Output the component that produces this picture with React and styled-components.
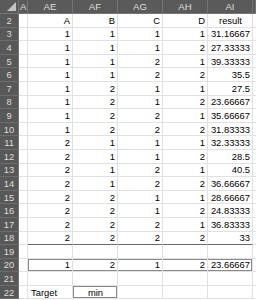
import React from "react";
import styled, { createGlobalStyle } from "styled-components";

const GlobalStyle = createGlobalStyle`
  html, body {
    margin: 0;
    padding: 0;
    background: #ffffff;
  }
  body {
    font-family: "Liberation Sans", Arial, sans-serif;
  }
`;

const columns = ["AD", "AE", "AF", "AG", "AH", "AI", ""];

const data = [
  [1, 1, 1, 1, "31.16667"],
  [1, 1, 1, 2, "27.33333"],
  [1, 1, 2, 1, "39.33333"],
  [1, 1, 2, 2, "35.5"],
  [1, 2, 1, 1, "27.5"],
  [1, 2, 1, 2, "23.66667"],
  [1, 2, 2, 1, "35.66667"],
  [1, 2, 2, 2, "31.83333"],
  [2, 1, 1, 1, "32.33333"],
  [2, 1, 1, 2, "28.5"],
  [2, 1, 2, 1, "40.5"],
  [2, 1, 2, 2, "36.66667"],
  [2, 2, 1, 1, "28.66667"],
  [2, 2, 1, 2, "24.83333"],
  [2, 2, 2, 1, "36.83333"],
  [2, 2, 2, 2, "33"],
];

const frameShadow = (edge) => {
  const parts = ["inset 0 1px 0 #8a8a8a", "inset 0 -1px 0 #8a8a8a"];
  if (edge === "left" || edge === "all") parts.push("inset 1px 0 0 #8a8a8a");
  if (edge === "right" || edge === "all") parts.push("inset -1px 0 0 #8a8a8a");
  return parts.join(", ");
};

export default function App() {
  const renderRow = (num, values, opts = {}) => (
    <React.Fragment key={num}>
      <RowHead>{num}</RowHead>
      <Cell />
      {values.map((v, i) => (
        <Cell
          key={i}
          $align={opts.align ? opts.align[i] : "right"}
          $darkBottom={opts.darkBottom}
          $frame={
            opts.framed
              ? i === 0
                ? "left"
                : i === values.length - 1
                ? "right"
                : "mid"
              : opts.boxed && opts.boxed[i]
              ? "all"
              : null
          }
        >
          {v}
        </Cell>
      ))}
      <Cell />
    </React.Fragment>
  );

  return (
    <>
      <GlobalStyle />
      <Sheet>
        <Corner>
          <Triangle />
        </Corner>
        {columns.map((c, i) => (
          <ColHead key={i} $clip={c === "AD"}>
            {c}
          </ColHead>
        ))}

        {renderRow(2, ["A", "B", "C", "D", "result"], {
          align: ["right", "right", "right", "right", "center"],
        })}
        {data.map((row, i) =>
          renderRow(i + 3, row, { darkBottom: i === data.length - 1 })
        )}
        {renderRow(19, ["", "", "", "", ""])}
        {renderRow(20, [1, 2, 1, 2, "23.66667"], { framed: true })}
        {renderRow(21, ["", "", "", "", ""])}
        {renderRow(22, ["Target", "min", "", "", ""], {
          align: ["left", "center", "right", "right", "right"],
          boxed: [false, true, false, false, false],
        })}
      </Sheet>
    </>
  );
}

const Sheet = styled.div`
  display: grid;
  grid-template-columns: 19px 9px 45px 45px 45px 45px 45px 3px;
  grid-template-rows: 14px repeat(21, 13.6px);
  width: 256px;
  height: 300px;
  overflow: hidden;
  font-size: 9.4px;
  color: #000000;
`;

const Corner = styled.div`
  position: relative;
  background: #5a5a5a;
  border-right: 1px solid #747474;
  border-bottom: 1px solid #747474;
  box-sizing: border-box;
`;

const Triangle = styled.div`
  position: absolute;
  right: 2px;
  bottom: 2px;
  width: 0;
  height: 0;
  border-left: 9px solid transparent;
  border-bottom: 9px solid #c4c4c4;
`;

const ColHead = styled.div`
  background: #5a5a5a;
  color: #dedede;
  border-right: 1px solid #747474;
  border-bottom: 1px solid #747474;
  box-sizing: border-box;
  display: flex;
  align-items: center;
  justify-content: ${(p) => (p.$clip ? "flex-start" : "center")};
  overflow: hidden;
  white-space: nowrap;
  font-size: 9.6px;
  padding-left: ${(p) => (p.$clip ? "1px" : "0")};
`;

const RowHead = styled.div`
  background: #585858;
  color: #dcdcdc;
  border-right: 1px solid #747474;
  border-bottom: 1px solid #6c6c6c;
  box-sizing: border-box;
  display: flex;
  align-items: center;
  justify-content: center;
  font-size: 9.4px;
`;

const Cell = styled.div`
  border-right: 1px solid #e1e1e1;
  border-bottom: 1px solid ${(p) => (p.$darkBottom ? "#6a6a6a" : "#e1e1e1")};
  box-sizing: border-box;
  display: flex;
  align-items: center;
  justify-content: ${(p) =>
    p.$align === "left"
      ? "flex-start"
      : p.$align === "center"
      ? "center"
      : "flex-end"};
  padding: 0 2px 0 3px;
  white-space: nowrap;
  overflow: hidden;
  box-shadow: ${(p) => (p.$frame ? frameShadow(p.$frame) : "none")};
`;
